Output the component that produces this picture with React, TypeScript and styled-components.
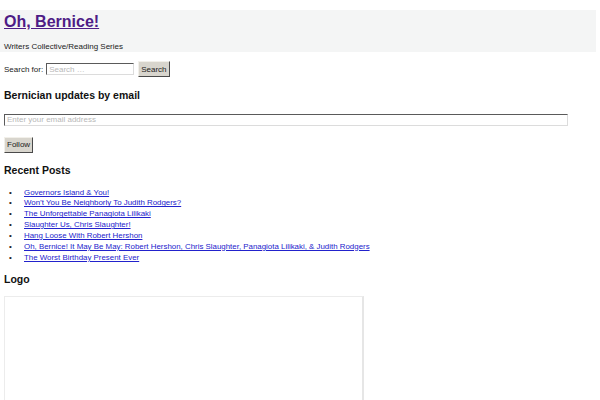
import React from "react";
import styled, { createGlobalStyle } from "styled-components";

const Global = createGlobalStyle`
  html, body { margin: 0; padding: 0; background: #fff; }
  body { font-family: "Liberation Sans", Arial, sans-serif; color: #111; }
`;

const Page = styled.div`
  padding: 10px 4px 0 0;
  width: 600px;
  height: 400px;
  overflow: hidden;
  box-sizing: border-box;
`;

const Header = styled.header`
  background: #f4f5f5;
  width: 596px;
  height: 42px;
  box-sizing: border-box;
  padding: 2px 4px 0;
`;

const SiteTitle = styled.a`
  display: block;
  font-size: 16px;
  font-weight: bold;
  line-height: 20px;
  color: #4e1c86;
  text-decoration: underline;
  width: max-content;
`;

const Tagline = styled.p`
  margin: 10px 0 0;
  font-size: 8px;
  line-height: 10px;
  color: #222;
`;

const SearchForm = styled.form`
  display: flex;
  align-items: center;
  margin: 9px 0 0 4px;
  height: 16px;
`;

const Label = styled.label`
  font-size: 8px;
  color: #222;
  margin-right: 3px;
`;

const TextInput = styled.input<{ $w: number }>`
  width: ${(p) => p.$w}px;
  height: 12px;
  box-sizing: border-box;
  padding: 0 2px;
  font-family: "Liberation Sans", Arial, sans-serif;
  font-size: 8px;
  border: 1px solid;
  border-color: #5a5a5a #dcdcdc #dcdcdc #5a5a5a;
  background: #fff;
  outline: none;
  &::placeholder { color: #b8b8b8; }
`;

const Button = styled.button`
  font-family: "Liberation Sans", Arial, sans-serif;
  font-size: 8px;
  color: #222;
  background: #d8d5cd;
  border: 1px solid;
  border-color: #f2f0ea #4a4a4a #4a4a4a #f2f0ea;
  height: 16px;
  padding: 0 2px;
  margin: 0;
`;

const SearchButton = styled(Button)`
  margin-left: 4px;
`;

const Widget = styled.section`
  padding-left: 4px;
`;

const WidgetTitle = styled.h2<{ $top: number }>`
  margin: ${(p) => p.$top}px 0 0;
  font-size: 10.5px;
  line-height: 14px;
  font-weight: bold;
  color: #111;
`;

const EmailRow = styled.div`
  margin-top: 6px;
`;

const FollowRow = styled.div`
  margin-top: 7px;
`;

const PostList = styled.ul`
  margin: 11px 0 0;
  padding: 0;
  list-style: none;
  font-size: 7.9px;
  line-height: 10.85px;
`;

const PostItem = styled.li`
  &::before {
    content: "•";
    display: inline-block;
    width: 20px;
    padding-left: 5px;
    box-sizing: border-box;
    color: #222;
    font-size: 8px;
  }
`;

const PostLink = styled.a`
  color: #2222cc;
  text-decoration: underline;
`;

const LogoBox = styled.div`
  margin-top: 10px;
  width: 360px;
  height: 120px;
  box-sizing: border-box;
  border: 1px solid #ececec;
  border-right: 2px solid #e6e6e6;
  background: #fff;
`;

const posts = [
  "Governors Island & You!",
  "Won\u2019t You Be Neighborly To Judith Rodgers?",
  "The Unforgettable Panagiota Lilikaki",
  "Slaughter Us, Chris Slaughter!",
  "Hang Loose With Robert Hershon",
  "Oh, Bernice! It May Be May: Robert Hershon, Chris Slaughter, Panagiota Lilikaki, & Judith Rodgers",
  "The Worst Birthday Present Ever",
];

export default function App() {
  return (
    <Page>
      <Global />
      <Header>
        <SiteTitle href="#">Oh, Bernice!</SiteTitle>
        <Tagline>Writers Collective/Reading Series</Tagline>
      </Header>
      <SearchForm onSubmit={(e) => e.preventDefault()}>
        <Label>Search for:</Label>
        <TextInput $w={88} placeholder="Search …" />
        <SearchButton type="submit">Search</SearchButton>
      </SearchForm>
      <Widget>
        <WidgetTitle $top={11}>Bernician updates by email</WidgetTitle>
        <EmailRow>
          <TextInput $w={564} placeholder="Enter your email address" />
        </EmailRow>
        <FollowRow>
          <Button>Follow</Button>
        </FollowRow>
        <WidgetTitle $top={10}>Recent Posts</WidgetTitle>
        <PostList>
          {posts.map((p) => (
            <PostItem key={p}>
              <PostLink href="#">{p}</PostLink>
            </PostItem>
          ))}
        </PostList>
        <WidgetTitle $top={9}>Logo</WidgetTitle>
        <LogoBox />
      </Widget>
    </Page>
  );
}
